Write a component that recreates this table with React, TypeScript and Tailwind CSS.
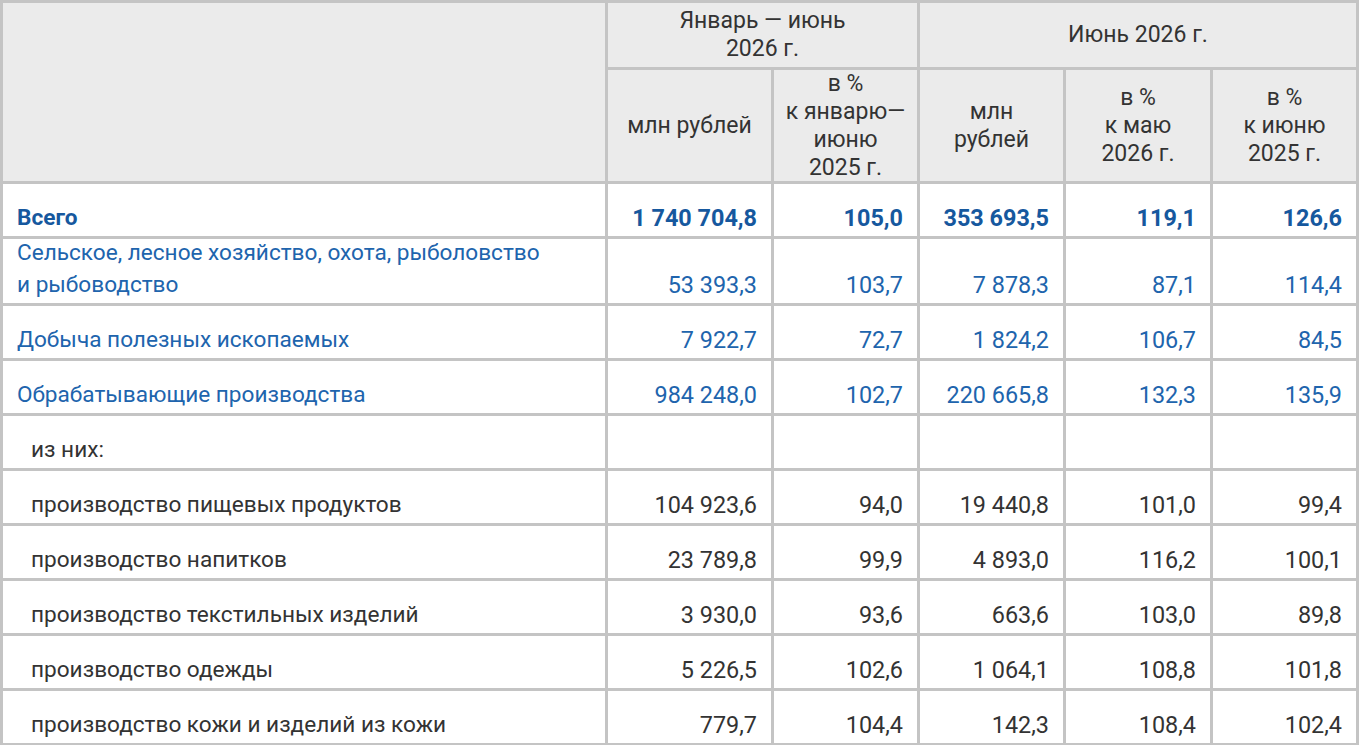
import type { ReactNode } from 'react';

type Row = {
  label: ReactNode;
  values: string[];
  tone?: 'total' | 'blue';
  indent?: boolean;
  tall?: boolean;
};

const rows: Row[] = [
  { label: 'Всего', values: ['1 740 704,8', '105,0', '353 693,5', '119,1', '126,6'], tone: 'total' },
  {
    label: (
      <>
        Сельское, лесное хозяйство, охота, рыболовство
        <br />и рыбоводство
      </>
    ),
    values: ['53 393,3', '103,7', '7 878,3', '87,1', '114,4'],
    tone: 'blue',
    tall: true,
  },
  { label: 'Добыча полезных ископаемых', values: ['7 922,7', '72,7', '1 824,2', '106,7', '84,5'], tone: 'blue' },
  { label: 'Обрабатывающие производства', values: ['984 248,0', '102,7', '220 665,8', '132,3', '135,9'], tone: 'blue' },
  { label: 'из них:', values: ['', '', '', '', ''], indent: true },
  { label: 'производство пищевых продуктов', values: ['104 923,6', '94,0', '19 440,8', '101,0', '99,4'], indent: true },
  { label: 'производство напитков', values: ['23 789,8', '99,9', '4 893,0', '116,2', '100,1'], indent: true },
  { label: 'производство текстильных изделий', values: ['3 930,0', '93,6', '663,6', '103,0', '89,8'], indent: true },
  { label: 'производство одежды', values: ['5 226,5', '102,6', '1 064,1', '108,8', '101,8'], indent: true },
  { label: 'производство кожи и изделий из кожи', values: ['779,7', '104,4', '142,3', '108,4', '102,4'], indent: true },
  { label: '', values: ['', '', '', '', ''] },
];

export default function App() {
  return (
    <div className="min-h-screen bg-white font-['Roboto',sans-serif] text-[23px] text-[#333]">
      <div className="grid w-[1359px] grid-cols-[602px_163px_143px_143px_144px_143px] grid-rows-[64px_111px] gap-[3px] bg-[#c4c4c4] p-[3px]">
        <div className="row-span-2 bg-[#ebebeb]" />
        <HeadCell className="col-span-2">
          Январь — июнь
          <br />
          2026 г.
        </HeadCell>
        <HeadCell className="col-span-3">Июнь 2026 г.</HeadCell>
        <HeadCell>млн рублей</HeadCell>
        <HeadCell>
          в %
          <br />к январю—
          <br />
          июню
          <br />
          2025 г.
        </HeadCell>
        <HeadCell>
          млн
          <br />
          рублей
        </HeadCell>
        <HeadCell>
          в %
          <br />к маю
          <br />
          2026 г.
        </HeadCell>
        <HeadCell>
          в %
          <br />к июню
          <br />
          2025 г.
        </HeadCell>

        {rows.map((row, i) => (
          <DataRow key={i} row={row} />
        ))}
      </div>
    </div>
  );
}

function HeadCell({ className = '', children }: { className?: string; children: ReactNode }) {
  return (
    <div className={`flex items-center justify-center bg-[#ebebeb] text-center leading-[28px] ${className}`}>
      <span>{children}</span>
    </div>
  );
}

function DataRow({ row }: { row: Row }) {
  const color =
    row.tone === 'total'
      ? 'font-bold text-[#16589e]'
      : row.tone === 'blue'
        ? 'text-[#2064ad]'
        : 'text-[#333]';
  const height = row.tall ? 'h-[64px]' : 'h-[52px]';
  return (
    <>
      <div
        className={`flex items-end bg-white pb-[2px] text-[22.6px] leading-[32px] ${height} ${color} ${
          row.indent ? 'pl-[28px]' : 'pl-[14px]'
        }`}
      >
        <span>{row.label}</span>
      </div>
      {row.values.map((v, j) => (
        <div
          key={j}
          className={`flex items-end justify-end bg-white pr-[14px] pb-[2px] text-[23.4px] leading-[32px] ${height} ${color}`}
        >
          {v}
        </div>
      ))}
    </>
  );
}
